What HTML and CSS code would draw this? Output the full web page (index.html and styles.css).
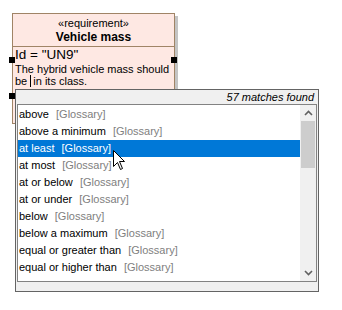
FILE: index.html
```html
<!DOCTYPE html>
<html lang="en">

<head>
    <meta charset="UTF-8">
    <title>Vehicle mass</title>
    <link rel="stylesheet" href="styles.css">
</head>

<body>
    <div class="req">
        <div class="req-head">
            <div class="stereo">«requirement»</div>
            <div class="req-name">Vehicle mass</div>
        </div>
        <div class="req-body">
            <div class="req-id">Id = "UN9"</div>
            <div class="req-text">The hybrid vehicle mass should be <span class="caret"></span>in its class.</div>
        </div>
    </div>
    <div class="handle h-tl"></div>
    <div class="handle h-tr"></div>
    <div class="handle h-bl"></div>

    <div class="popup">
        <div class="popup-head">57 matches found</div>
        <div class="list">
            <ul class="items">
                <li>above <span class="tag">[Glossary]</span></li>
                <li>above a minimum <span class="tag">[Glossary]</span></li>
                <li class="selected">at least <span class="tag">[Glossary]</span></li>
                <li>at most <span class="tag">[Glossary]</span></li>
                <li>at or below <span class="tag">[Glossary]</span></li>
                <li>at or under <span class="tag">[Glossary]</span></li>
                <li>below <span class="tag">[Glossary]</span></li>
                <li>below a maximum <span class="tag">[Glossary]</span></li>
                <li>equal or greater than <span class="tag">[Glossary]</span></li>
                <li>equal or higher than <span class="tag">[Glossary]</span></li>
            </ul>
            <div class="scrollbar">
                <div class="arrow">
                    <svg width="9" height="6" viewBox="0 0 9 6"><polyline points="1,5 4.5,1.5 8,5" fill="none" stroke="#606060" stroke-width="1.6"/></svg>
                </div>
                <div class="thumb"></div>
                <div class="track"></div>
                <div class="arrow">
                    <svg width="9" height="6" viewBox="0 0 9 6"><polyline points="1,1 4.5,4.5 8,1" fill="none" stroke="#606060" stroke-width="1.6"/></svg>
                </div>
            </div>
        </div>
    </div>

    <svg class="pointer" width="13" height="21" viewBox="0 0 13 21">
        <path d="M0.5,0.5 L0.5,16.5 L4.5,12.5 L7.5,19.5 L9.5,18.5 L6.5,11.5 L11.5,11.5 Z" fill="#fff" stroke="#000" stroke-width="1"/>
    </svg>
</body>

</html>
```

FILE: styles.css
```css
body {
    margin: 0;
    background: #fff;
    font-family: "Liberation Sans", Arial, sans-serif;
    font-size: 11px;
    color: #000;
}

.req {
    margin: 13px 0 0 12px;
    width: 161px;
    height: 109px;
    background: #fee8e3;
    border: 1px solid #a08466;
    box-shadow: 3px 3px 0 #c4c4c4;
}

.req-head {
    height: 32px;
    border-bottom: 1px solid #a08466;
    text-align: center;
}

.stereo {
    padding-top: 2px;
    font-size: 11px;
    line-height: 14px;
}

.req-name {
    font-weight: bold;
    font-size: 12px;
    line-height: 15px;
}

.req-body {
    padding: 0 0 0 2px;
}

.req-id {
    font-size: 13.5px;
    line-height: 16px;
}

.req-text {
    font-size: 11px;
    line-height: 12px;
}

.caret {
    display: inline-block;
    width: 1px;
    height: 12px;
    margin-right: 2px;
    background: #000;
    vertical-align: -2px;
}

.handle {
    position: absolute;
    width: 6px;
    height: 6px;
    background: #000;
}

.h-tl {
    left: 9px;
    top: 57px;
}

.h-tr {
    left: 171px;
    top: 57px;
}

.h-bl {
    left: 9px;
    top: 93px;
}

.popup {
    position: absolute;
    left: 15px;
    top: 89px;
    width: 302px;
    height: 201px;
    background: #f0f0f0;
    border: 1px solid #646464;
}

.popup-head {
    height: 14px;
    padding-right: 4px;
    font-style: italic;
    font-size: 11px;
    line-height: 14px;
    text-align: right;
}

.list {
    display: flex;
    margin-left: 1px;
    width: 298px;
    height: 176px;
    background: #fff;
    border: 1px solid #828282;
}

.items {
    flex: 1;
    margin: 0;
    padding: 1px 0 0;
    list-style: none;
}

.items li {
    height: 17px;
    padding-left: 1px;
    line-height: 17px;
    white-space: nowrap;
}

.tag {
    margin-left: 4px;
    color: #808080;
}

.items .selected {
    background: #0078d7;
    color: #fff;
}

.selected .tag {
    color: #fff;
}

.scrollbar {
    display: flex;
    flex-direction: column;
    width: 16px;
    background: #f0f0f0;
}

.arrow {
    display: flex;
    align-items: center;
    justify-content: center;
    height: 16px;
}

.thumb {
    height: 47px;
    margin: 0 1px;
    background: #cdcdcd;
}

.track {
    flex: 1;
}

.pointer {
    position: absolute;
    left: 113px;
    top: 150px;
}
```
